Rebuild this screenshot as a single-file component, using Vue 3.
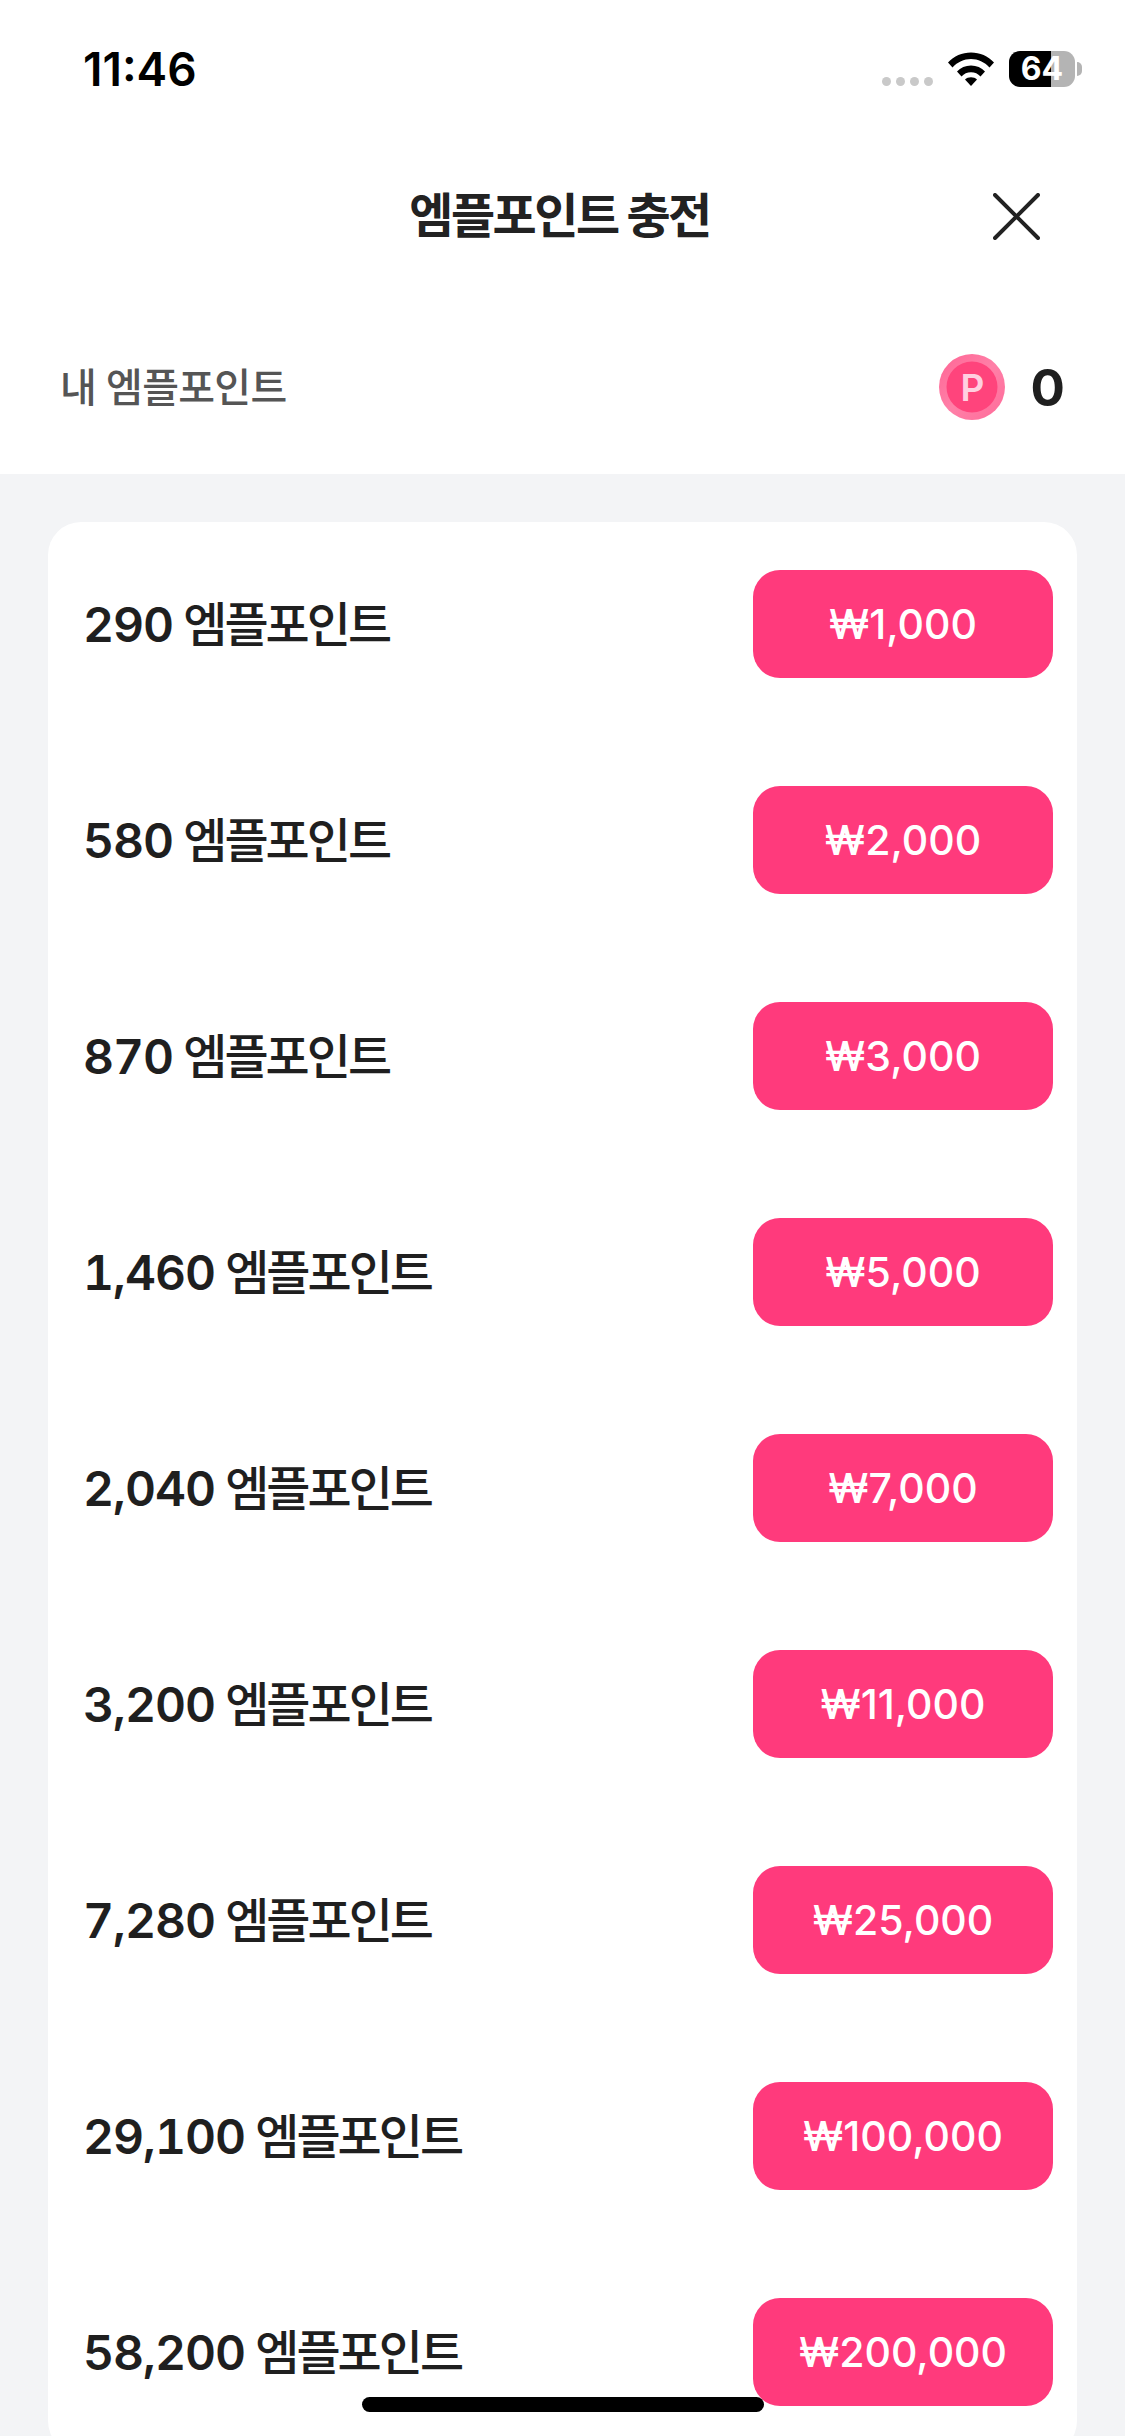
<template>
  <div class="screen">
    <div class="status-bar">
      <span class="time">11:46</span>
      <div class="status-icons">
        <div class="signal">
          <i v-for="n in 4" :key="n"></i>
        </div>
        <svg class="wifi" width="46" height="34" viewBox="0 0 46 34">
          <path d="M0 10.5C6 4 14 0.5 23 0.5S40 4 46 10.5L41.5 15.5C36.5 10 30 7 23 7S9.5 10 4.5 15.5Z" fill="#000" />
          <path d="M9 19.5C12.5 15.5 17.5 13.5 23 13.5S33.500 15.500 37 19.500L32.500 24.500C30 21.800 26.800 20.300 23 20.300S16 21.800 13.500 24.500Z" fill="#000" />
          <path d="M17 27.500C18.500 26 20.700 25.200 23 25.200S27.500 26 29 27.500L23 34Z" fill="#000" />
        </svg>
        <div class="battery">
          <div class="battery-body">
            <span class="battery-text">64</span>
          </div>
          <div class="battery-nub"></div>
        </div>
      </div>
    </div>

    <header class="nav">
      <span></span>
      <h1 class="title">엠플포인트 충전</h1>
      <button class="close" aria-label="닫기">
        <svg width="47" height="47" viewBox="0 0 47 47">
          <path d="M2 2L45 45M45 2L2 45" stroke="#222" stroke-width="4" stroke-linecap="round" fill="none" />
        </svg>
      </button>
    </header>

    <section class="my-points">
      <span class="my-label">내 엠플포인트</span>
      <div class="my-value">
        <svg class="coin" width="66" height="66" viewBox="0 0 66 66">
          <defs>
            <linearGradient id="coinRing" x1="0.1" y1="0.1" x2="0.9" y2="0.9">
              <stop offset="0" stop-color="#ff6a98" />
              <stop offset="0.5" stop-color="#ff80a8" />
              <stop offset="1" stop-color="#ff6f9c" />
            </linearGradient>
          </defs>
          <circle cx="33" cy="33" r="33" fill="url(#coinRing)" />
          <circle cx="33" cy="33" r="25.500" fill="#ff447c" />
          <text x="33.500" y="47" text-anchor="middle" class="coin-letter">P</text>
        </svg>
        <span class="my-count">0</span>
      </div>
    </section>

    <main class="content">
      <div class="card">
        <div v-for="item in products" :key="item.price" class="row">
          <span class="amount"><span class="num">{{ item.points }}</span> <span class="unit">엠플포인트</span></span>
          <button class="buy">₩{{ item.price }}</button>
        </div>
      </div>
    </main>

    <div class="home-bar"></div>
  </div>
</template>

<script setup>
const products = [
  { points: '290', price: '1,000' },
  { points: '580', price: '2,000' },
  { points: '870', price: '3,000' },
  { points: '1,460', price: '5,000' },
  { points: '2,040', price: '7,000' },
  { points: '3,200', price: '11,000' },
  { points: '7,280', price: '25,000' },
  { points: '29,100', price: '100,000' },
  { points: '58,200', price: '200,000' },
]
</script>

<style>
html,
body {
  margin: 0;
  background: #fff;
}
</style>

<style scoped>
.screen {
  position: relative;
  width: 1125px;
  height: 2436px;
  overflow: hidden;
  background: #fff;
  color: #1f1f1f;
  font-family: Inter, 'Noto Sans CJK KR', sans-serif;
}

.status-bar {
  height: 132px;
  box-sizing: border-box;
  padding: 6px 43px 0 83px;
  display: flex;
  align-items: center;
  justify-content: space-between;
}

.time {
  font-size: 46px;
  font-weight: 600;
  color: #000;
}

.status-icons {
  display: flex;
  align-items: center;
}

.signal {
  display: flex;
  gap: 5px;
  margin-right: 15px;
  padding-top: 24px;
}

.signal i {
  width: 9px;
  height: 9px;
  border-radius: 50%;
  background: #c9c9c9;
}

.wifi {
  margin-right: 15px;
}

.battery {
  display: flex;
  align-items: center;
}

.battery-body {
  width: 66px;
  height: 36px;
  border-radius: 11px;
  background: linear-gradient(90deg, #000 42px, #b4b4b4 42px);
  display: flex;
  align-items: center;
  justify-content: center;
}

.battery-text {
  font-size: 32px;
  font-weight: 700;
  color: #fff;
  line-height: 1;
}

.battery-nub {
  width: 5px;
  height: 14px;
  margin-left: 2px;
  border-radius: 0 7px 7px 0;
  background: #b4b4b4;
}

.nav {
  height: 168px;
  display: grid;
  grid-template-columns: 1fr auto 1fr;
  align-items: center;
  padding: 0 85px 0 79px;
}

.title {
  margin: 0 0 8px;
  font-size: 48px;
  font-weight: 700;
  letter-spacing: -2.500px;
  color: #222;
}

.close {
  justify-self: end;
  padding: 0;
  border: 0;
  background: none;
  display: flex;
}

.my-points {
  height: 174px;
  box-sizing: border-box;
  padding: 0 60px 0 60px;
  display: flex;
  align-items: center;
  justify-content: space-between;
}

.my-label {
  margin-bottom: 5px;
  font-size: 40px;
  font-weight: 500;
  letter-spacing: -0.700px;
  color: #555;
}

.my-value {
  display: flex;
  align-items: center;
  gap: 26px;
}

.coin-letter {
  font-family: Inter, sans-serif;
  font-size: 37px;
  font-weight: 600;
  fill: #ffcfe0;
}

.my-count {
  font-size: 51px;
  font-weight: 700;
}

.content {
  background: #f3f4f6;
  padding: 48px 48px 0;
  height: 2000px;
}

.card {
  background: #fff;
  border-radius: 33px;
  padding: 48px 24px 48px 35px;
  display: flex;
  flex-direction: column;
  gap: 108px;
}

.row {
  display: flex;
  align-items: center;
  justify-content: space-between;
}

.amount {
  margin-bottom: 6px;
  font-size: 48px;
  font-weight: 600;
  color: #1f1f1f;
}

.num {
  font-variant-numeric: tabular-nums;
  letter-spacing: -1px;
}

.unit {
  margin-left: -2px;
  font-weight: 500;
  letter-spacing: -3px;
}

.buy {
  width: 300px;
  height: 108px;
  border: 0;
  padding: 0;
  border-radius: 27px;
  background: #ff3a7c;
  color: #fff;
  font-family: Inter, sans-serif;
  font-size: 41px;
  font-weight: 500;
}

.home-bar {
  position: absolute;
  left: 362px;
  top: 2397px;
  width: 402px;
  height: 15px;
  border-radius: 8px;
  background: #000;
}
</style>
